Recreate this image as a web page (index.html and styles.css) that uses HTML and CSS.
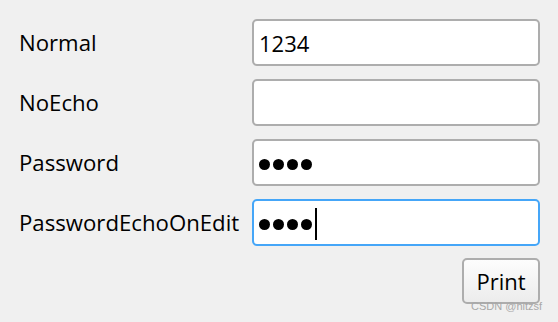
FILE: index.html
```html
<!DOCTYPE html>
<html>
<head>
<meta charset="utf-8">
<link rel="stylesheet" href="styles.css">
</head>
<body>
<div class="form">
  <div class="label">Normal</div>
  <div class="field"><span class="value">1234</span></div>
  <div class="label">NoEcho</div>
  <div class="field"></div>
  <div class="label">Password</div>
  <div class="field"><span class="dot"></span><span class="dot"></span><span class="dot"></span><span class="dot"></span></div>
  <div class="label">PasswordEchoOnEdit</div>
  <div class="field focused"><span class="dot"></span><span class="dot"></span><span class="dot"></span><span class="dot"></span><span class="caret"></span></div>
  <div class="actions"><button class="btn">Print</button></div>
</div>
<div class="watermark">CSDN @hitzsf</div>
</body>
</html>
```
FILE: styles.css
```css
html, body {
  margin: 0;
  padding: 0;
  background: #f0f0f0;
  width: 558px;
  height: 322px;
  overflow: hidden;
  font-family: "Open Sans", "Noto Sans", sans-serif;
  color: #000;
}
.form {
  display: grid;
  grid-template-columns: 234px 288px;
  grid-auto-rows: 47px;
  row-gap: 13px;
  padding: 19px 18px 0 18px;
}
.label {
  font-size: 22.2px;
  display: flex;
  align-items: center;
  padding-left: 1px;
}
.field {
  box-sizing: border-box;
  height: 47px;
  background: #fff;
  border: 2px solid #adadad;
  border-radius: 5px;
  display: flex;
  align-items: center;
  padding-left: 5px;
  font-size: 22px;
}
.field.focused {
  border-color: #45a6f8;
}
.dot {
  display: inline-block;
  width: 11px;
  height: 11px;
  border-radius: 50%;
  background: #000;
  margin-right: 3px;
  margin-top: 4px;
}
.caret {
  display: inline-block;
  width: 2px;
  height: 32px;
  background: #000;
  margin-top: 2px;
}
.actions {
  grid-column: 2;
  display: flex;
  justify-content: flex-end;
  align-items: start;
}
.btn {
  box-sizing: border-box;
  width: 78px;
  height: 46px;
  margin-top: -1px;
  font-family: "Open Sans", "Noto Sans", sans-serif;
  font-size: 22px;
  color: #000;
  background: linear-gradient(#fdfdfd, #ececec);
  border: 2px solid #adadad;
  border-radius: 5px;
  padding: 0;
}
.watermark {
  position: absolute;
  left: 471px;
  top: 300px;
  font-family: "Liberation Sans", Arial, sans-serif;
  font-size: 11px;
  color: #a8a8a8;
}
```
